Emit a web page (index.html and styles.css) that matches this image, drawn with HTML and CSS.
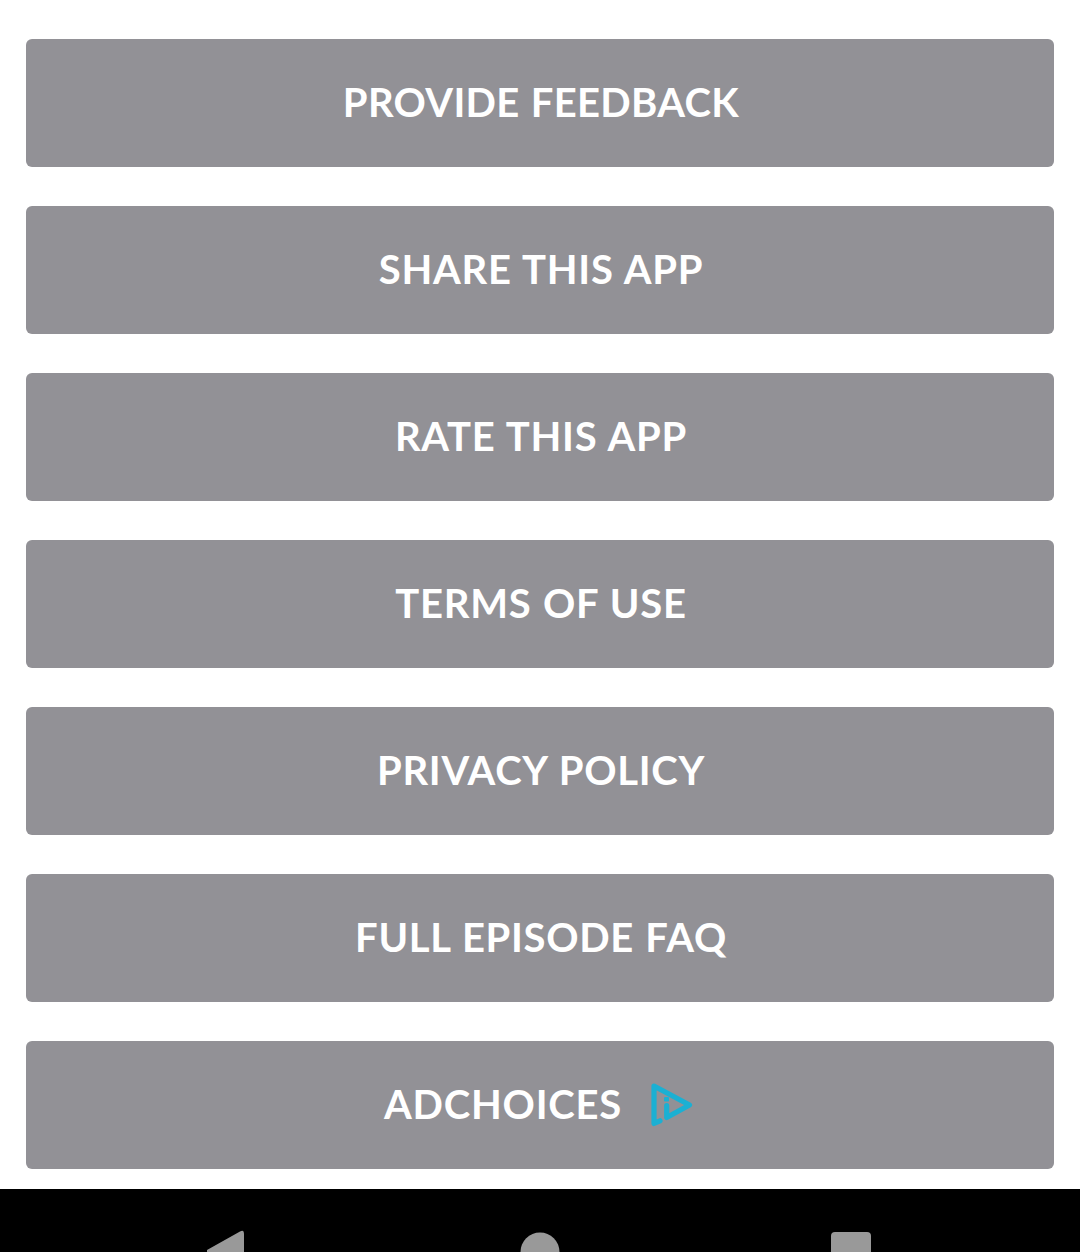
FILE: index.html
```html
<!DOCTYPE html>
<html lang="en">
<head>
<meta charset="utf-8">
<title>Settings</title>
<link rel="stylesheet" href="styles.css">
</head>
<body>
<main class="menu">
<button class="item"><span class="label feedback">PROVIDE FEEDBACK</span></button>
<button class="item"><span class="label share">SHARE THIS APP</span></button>
<button class="item"><span class="label rate">RATE THIS APP</span></button>
<button class="item"><span class="label terms">TERMS OF USE</span></button>
<button class="item"><span class="label privacy">PRIVACY POLICY</span></button>
<button class="item"><span class="label faq">FULL EPISODE FAQ</span></button>
<button class="item"><span class="label ads">ADCHOICES</span>
<svg class="adicon" width="42" height="44" viewBox="0 0 42 44" fill="none" stroke="#1bb0d3" stroke-width="5.2" stroke-linejoin="round" stroke-linecap="round"><path d="M9 37.8L3 40.5V3L38.5 22L15.7 34.5V22.5"/><rect x="13" y="14" width="5" height="4.5" rx="1" fill="#1bb0d3" stroke="none"/></svg></button>
</main>
<nav class="navbar">
<svg width="1080" height="63" viewBox="0 0 1080 63" fill="#999"><path d="M207 61L240 42.5Q244 40 244 45V84L207 65Z"/><circle cx="540" cy="63" r="19.5"/><rect x="831" y="43" width="40" height="40" rx="4"/></svg>
</nav>
</body>
</html>
```

FILE: styles.css
```css
body { margin: 0; background: #fff; overflow: hidden; }
.menu { box-sizing: border-box; height: 1189px; padding: 39px 26px 0; display: flex; flex-direction: column; gap: 39px; }
.item { height: 128px; flex: none; border: 0; padding: 0; border-radius: 6px; background: #929196; color: #fff; display: flex; align-items: center; justify-content: center; font: 700 40px/48px "Lato", sans-serif; }
.label { white-space: nowrap; padding: 0 0 2px 2px; letter-spacing: .75px; word-spacing: 1px; }
.feedback { letter-spacing: .33px; }
.privacy { letter-spacing: .7px; }
.faq { letter-spacing: .68px; }
.ads { padding-left: 0; }
.adicon { margin: 0 3px 0 29px; }
.navbar { height: 63px; background: #000; }
.navbar svg { display: block; }
```
